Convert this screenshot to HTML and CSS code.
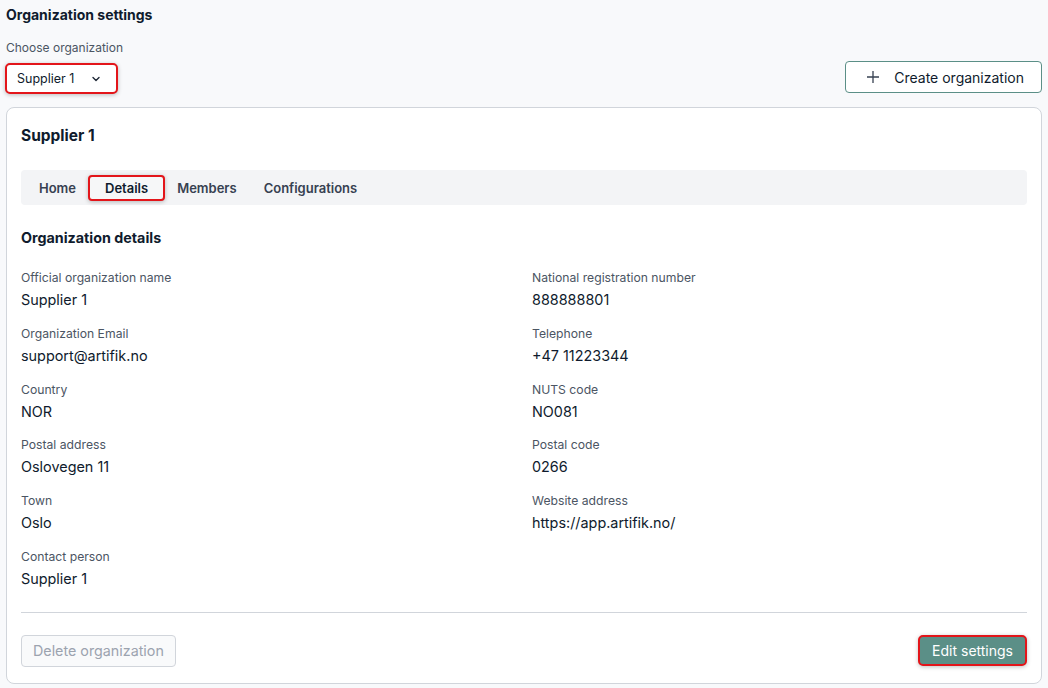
FILE: index.html
```html
<!DOCTYPE html>
<html lang="en">
<head>
  <meta charset="UTF-8">
  <title>Organization settings</title>
  <link rel="stylesheet" href="styles.css">
</head>
<body>
  <h1 class="page-title">Organization settings</h1>

  <div class="toolbar">
    <div class="picker">
      <label>Choose organization</label>
      <button class="select highlight">
        Supplier 1
        <svg width="12" height="12" viewBox="0 0 12 12"><path d="M3 4.5 6 7.5 9 4.5" fill="none" stroke="#1f2937" stroke-width="1.4" stroke-linecap="round" stroke-linejoin="round"/></svg>
      </button>
    </div>
    <button class="btn-outline">
      <svg width="14" height="14" viewBox="0 0 14 14"><path d="M7 1v12M1 7h12" stroke="#374151" stroke-width="1.3"/></svg>
      Create organization
    </button>
  </div>

  <div class="card">
    <h2>Supplier 1</h2>

    <div class="tabs">
      <span class="tab">Home</span>
      <span class="tab active highlight">Details</span>
      <span class="tab">Members</span>
      <span class="tab wide">Configurations</span>
    </div>

    <h3>Organization details</h3>

    <div class="details">
      <div class="field"><div class="label">Official organization name</div><div class="value">Supplier 1</div></div>
      <div class="field"><div class="label">National registration number</div><div class="value">888888801</div></div>
      <div class="field"><div class="label">Organization Email</div><div class="value">support@artifik.no</div></div>
      <div class="field"><div class="label">Telephone</div><div class="value">+47 11223344</div></div>
      <div class="field"><div class="label">Country</div><div class="value">NOR</div></div>
      <div class="field"><div class="label">NUTS code</div><div class="value">NO081</div></div>
      <div class="field"><div class="label">Postal address</div><div class="value">Oslovegen 11</div></div>
      <div class="field"><div class="label">Postal code</div><div class="value">0266</div></div>
      <div class="field"><div class="label">Town</div><div class="value">Oslo</div></div>
      <div class="field"><div class="label">Website address</div><div class="value">https://app.artifik.no/</div></div>
      <div class="field"><div class="label">Contact person</div><div class="value">Supplier 1</div></div>
    </div>

    <div class="footer">
      <button class="btn-disabled">Delete organization</button>
      <button class="btn-primary highlight">Edit settings</button>
    </div>
  </div>
</body>
</html>
```

FILE: styles.css
```css
body {
  font-family: Inter, "Noto Sans", sans-serif;
  background: #f8f9fb;
  color: #0f1b2d;
  margin: 0;
  padding: 6px 6px 0 6px;
}
button {
  font-family: inherit;
}
.page-title {
  font-size: 14px;
  font-weight: 700;
  line-height: 18px;
  margin: 0;
  color: #0f1b2d;
}
.toolbar {
  display: flex;
  justify-content: space-between;
  align-items: flex-end;
  margin-top: 16px;
}
.picker label {
  display: block;
  font-size: 12px;
  color: #4b5563;
  line-height: 16px;
  margin-bottom: 7px;
}
.select {
  display: flex;
  align-items: center;
  gap: 16px;
  height: 31px;
  padding: 0 14px 0 10px;
  margin-left: -1px;
  background: #fff;
  border-radius: 5px;
  font-size: 12.5px;
  color: #0f1b2d;
}
.highlight {
  border: 2px solid #e3151a;
  box-shadow: 0 1px 4px rgba(0,0,0,0.25);
}
.btn-outline {
  display: flex;
  align-items: center;
  gap: 14px;
  height: 32px;
  padding: 0 17px 0 20px;
  margin-bottom: 1px;
  background: #fff;
  border: 1px solid #5b8f87;
  border-radius: 4px;
  font-size: 14px;
  color: #0f1b2d;
  cursor: pointer;
}
.card {
  background: #fff;
  border: 1px solid #d1d5db;
  border-radius: 8px;
  margin-top: 13px;
  padding: 17px 14px 16px 14px;
}
.card h2 {
  font-size: 15.5px;
  font-weight: 700;
  margin: 0;
  line-height: 22px;
}
.tabs {
  display: flex;
  align-items: center;
  background: #f3f4f6;
  border-radius: 4px;
  height: 35px;
  margin-top: 23px;
  padding: 0 6px;
}
.tab {
  font-size: 13px;
  font-weight: 600;
  color: #374151;
  padding: 3px 10px;
  border: 2px solid transparent;
  border-radius: 4px;
}
.tab.wide {
  margin-left: 3px;
}
.tab.active {
  color: #0f1b2d;
  background: #f6f7f8;
  padding: 3px 15px;
  border-color: #e3151a;
}
.card h3 {
  font-size: 14.3px;
  font-weight: 700;
  margin: 23px 0 0 0;
  line-height: 20px;
}
.details {
  display: grid;
  grid-template-columns: 1fr 1fr;
  column-gap: 16px;
  margin-top: 21px;
}
.field {
  height: 55.8px;
}
.label {
  font-size: 12.2px;
  color: #4b5563;
  line-height: 18px;
}
.value {
  font-size: 14.4px;
  line-height: 20px;
  margin-top: 3px;
  color: #0f1b2d;
}
.footer {
  display: flex;
  justify-content: space-between;
  align-items: center;
  border-top: 1px solid #d1d5db;
  margin-top: 8px;
  padding-top: 22px;
}
.btn-disabled {
  height: 32px;
  padding: 0 11px;
  background: #f9fafb;
  border: 1px solid #d1d5db;
  border-radius: 4px;
  color: #9ca3af;
  font-size: 14.3px;
}
.btn-primary {
  height: 31px;
  padding: 0 12px;
  background: #5b8f87;
  color: #fff;
  border-radius: 5px;
  font-size: 14px;
  cursor: pointer;
}
```
